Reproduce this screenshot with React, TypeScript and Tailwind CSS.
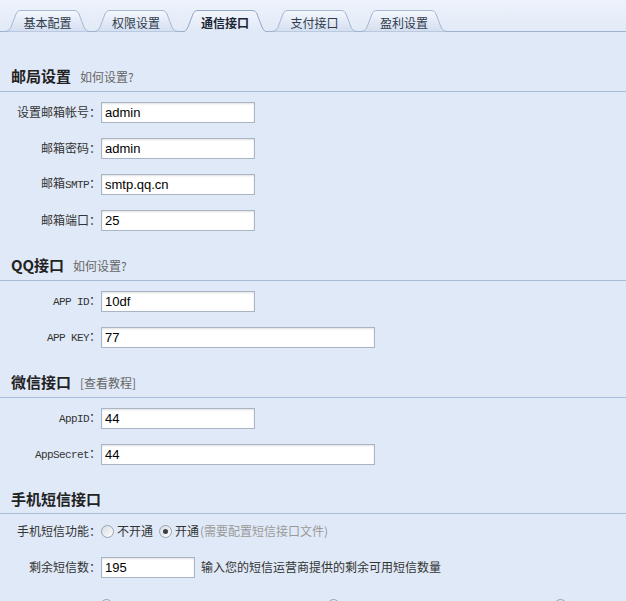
import React from 'react';

type TabItem = { label: string; w: string; width: number; active?: boolean };

const tabs: TabItem[] = [
  { label: '基本配置', w: 'w-[85px]', width: 85 },
  { label: '权限设置', w: 'w-[84px]', width: 84 },
  { label: '通信接口', w: 'w-[86px]', width: 86, active: true },
  { label: '支付接口', w: 'w-[85px]', width: 85 },
  { label: '盈利设置', w: 'w-[86px]', width: 86 },
];

const TabShape: React.FC<{ width: number; active?: boolean; id: string }> = ({ width: W, active, id }) => {
  const H = active ? 22 : 21.5;
  const d = `M0 ${H} C3 ${H} 5 19.5 6 17 L11 4 C12 1.5 13.5 0.5 16 0.5 L${W - 16} 0.5 C${W - 13.5} 0.5 ${W - 12} 1.5 ${W - 11} 4 L${W - 6} 17 C${W - 5} 19.5 ${W - 3} ${H} ${W} ${H}`;
  return (
    <svg className="absolute inset-0" width={W} height={22} viewBox={`0 0 ${W} 22`}>
      <defs>
        <linearGradient id={id} x1="0" y1="0" x2="0" y2="1">
          <stop offset="0" stopColor={active ? '#f1f5fc' : '#f5f8fd'} />
          <stop offset="1" stopColor={active ? '#e0e9f7' : '#d3def0'} />
        </linearGradient>
      </defs>
      <path d={d + (active ? '' : ' Z')} fill={`url(#${id})`} stroke="none" />
      <path d={d} fill="none" stroke={active ? '#93a8c8' : '#a5b7d1'} strokeWidth="1" />
    </svg>
  );
};

const Radio: React.FC<{ checked?: boolean }> = ({ checked }) => (
  <span className="relative inline-flex w-[13px] h-[13px] shrink-0 items-center justify-center rounded-full border border-[#9aa4b1] bg-gradient-to-br from-[#d9dde3] to-[#fbfcfd]">
    {checked && <span className="w-[5px] h-[5px] rounded-full bg-[#3a3f46]" />}
  </span>
);

const Input: React.FC<{ value: string; w: string }> = ({ value, w }) => (
  <input
    readOnly
    value={value}
    className={`${w} h-[21px] border border-[#a9b4c4] bg-white pl-[3px] text-[13px] text-black font-['Liberation_Sans',Arial,sans-serif] shadow-[inset_0_1px_2px_rgba(0,0,0,0.12)] outline-none`}
  />
);

const Row: React.FC<{ label: React.ReactNode; children: React.ReactNode }> = ({ label, children }) => (
  <div className="flex h-[36px] items-center">
    <div className="w-[101px] shrink-0 text-right text-[12px] leading-[16px] text-[#333]">{label}</div>
    {children}
  </div>
);

// latin bits of the labels: narrow fixed-width, like the old bitmap font
const Mono: React.FC<{ children: React.ReactNode }> = ({ children }) => (
  <span className="font-['Liberation_Mono',monospace] text-[11px] tracking-[-0.6px]">{children}</span>
);

const Section: React.FC<{ title: string; extra?: string; first?: boolean; children: React.ReactNode }> = ({
  title,
  extra,
  first,
  children,
}) => (
  <div>
    <div
      className={`${first ? 'mt-[17px]' : ''} flex items-baseline gap-[9px] border-b border-[#a9bcda] pl-[11px] pt-[17px] pb-[4px] leading-[20px]`}
    >
      <span className="text-[15px] font-bold text-[#222]">{title}</span>
      {extra && <span className="text-[12px] text-[#666]">{extra}</span>}
    </div>
    <div className="pt-[2px]">{children}</div>
  </div>
);

export default function App() {
  return (
    <div className="h-screen w-full overflow-hidden bg-[#e0e9f7] font-['Noto_Sans_CJK_SC','Noto_Sans',sans-serif]">
      {/* tab bar */}
      <div className="flex h-[32px] items-end gap-[4px] border-b border-[#9fb3d1] bg-gradient-to-b from-[#eef3fb] to-[#e2eaf7] pl-[5px]">
        {tabs.map((t, i) => (
          <div key={t.label} className={`relative mb-[-1px] h-[22px] ${t.w} ${t.active ? 'z-10' : ''}`}>
            <TabShape width={t.width} active={t.active} id={`tabg${i}`} />
            <div
              className={`relative flex h-full items-center justify-center pt-[3px] text-[12px] ${
                t.active ? 'font-bold text-[#1b2535]' : 'text-[#2f3b4c]'
              }`}
            >
              {t.label}
            </div>
          </div>
        ))}
      </div>

      <Section title="邮局设置" extra="如何设置?" first>
        <Row label="设置邮箱帐号：">
          <Input value="admin" w="w-[154px]" />
        </Row>
        <Row label="邮箱密码：">
          <Input value="admin" w="w-[154px]" />
        </Row>
        <Row label={<>邮箱<Mono>SMTP</Mono>：</>}>
          <Input value="smtp.qq.cn" w="w-[154px]" />
        </Row>
        <Row label="邮箱端口：">
          <Input value="25" w="w-[154px]" />
        </Row>
      </Section>

      <Section title="QQ接口" extra="如何设置?">
        <Row label={<><Mono>APP ID</Mono>：</>}>
          <Input value="10df" w="w-[154px]" />
        </Row>
        <Row label={<><Mono>APP KEY</Mono>：</>}>
          <Input value="77" w="w-[274px]" />
        </Row>
      </Section>

      <Section title="微信接口" extra="[查看教程]">
        <Row label={<><Mono>AppID</Mono>：</>}>
          <Input value="44" w="w-[154px]" />
        </Row>
        <Row label={<><Mono>AppSecret</Mono>：</>}>
          <Input value="44" w="w-[274px]" />
        </Row>
      </Section>

      <Section title="手机短信接口">
        <div className="-mt-[3px]">
          <Row label="手机短信功能：">
            <div className="flex items-center text-[12px] text-[#333]">
              <Radio />
              <span className="ml-[3px] mr-[6px]">不开通</span>
              <Radio checked />
              <span className="ml-[3px]">开通</span>
              <span className="ml-[1px] text-[#9a9a9a]">(需要配置短信接口文件)</span>
            </div>
          </Row>
          <Row label="剩余短信数：">
            <Input value="195" w="w-[94px]" />
            <span className="ml-[6px] text-[12px] text-[#333]">输入您的短信运营商提供的剩余可用短信数量</span>
          </Row>
          <div className="flex h-[40px] items-center pl-[100px]">
            <div className="w-[227px]">
              <Radio />
            </div>
            <div className="w-[227px]">
              <Radio />
            </div>
            <div>
              <Radio />
            </div>
          </div>
        </div>
      </Section>
    </div>
  );
}
